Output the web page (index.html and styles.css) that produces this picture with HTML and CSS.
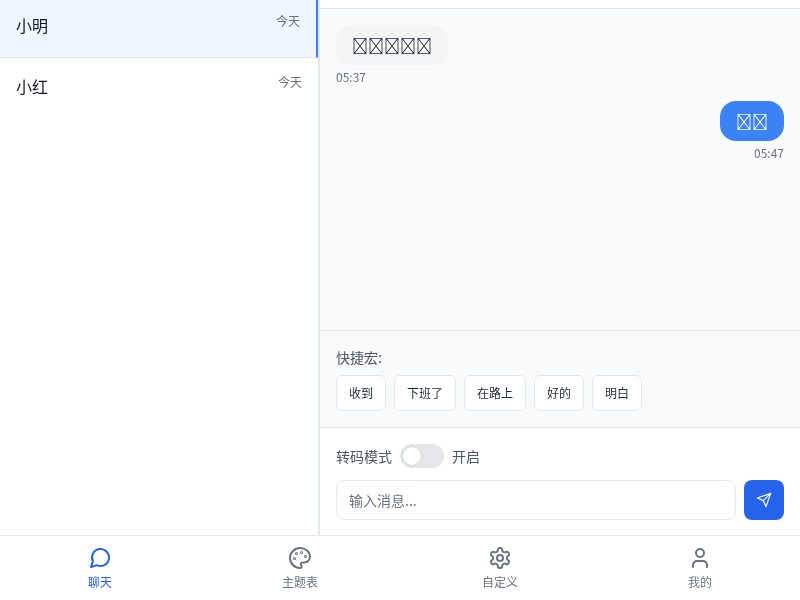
FILE: index.html
```html
<!DOCTYPE html>
<html lang="zh-CN">
<head>
<meta charset="utf-8">
<title>聊天</title>
<link rel="stylesheet" href="styles.css">
</head>
<body>
<div class="app">
  <main class="main">
    <aside class="sidebar">
      <div class="contact active">
        <span class="name">小明</span>
        <span class="date">今天</span>
      </div>
      <div class="contact">
        <span class="name">小红</span>
        <span class="date">今天</span>
      </div>
    </aside>
    <section class="chat">
      <div class="chat-head"></div>
      <div class="messages">
        <div class="msg">
          <div class="bubble">&#xE001;&#xE002;&#xE003;&#xE004;&#xE005;</div>
          <div class="time">05:37</div>
        </div>
        <div class="msg mine">
          <div class="bubble">&#xE006;&#xE007;</div>
          <div class="time">05:47</div>
        </div>
      </div>
      <div class="macros">
        <div class="macro-label">快捷宏:</div>
        <div class="macro-list">
          <button class="macro">收到</button>
          <button class="macro">下班了</button>
          <button class="macro">在路上</button>
          <button class="macro">好的</button>
          <button class="macro">明白</button>
        </div>
      </div>
      <div class="composer">
        <div class="mode">
          <span>转码模式</span>
          <span class="toggle"><span class="knob"></span></span>
          <span>开启</span>
        </div>
        <div class="input-row">
          <input class="input" type="text" placeholder="输入消息...">
          <button class="send" aria-label="发送">
            <svg class="send-icon" viewBox="0 0 24 24"><path d="m22 2-7 20-4-9-9-4Z"/><path d="M22 2 11 13"/></svg>
          </button>
        </div>
      </div>
    </section>
  </main>
  <nav class="nav">
    <div class="tab current">
      <svg class="icon" viewBox="0 0 24 24"><path d="m3 21 1.9-5.7a8.5 8.5 0 1 1 3.8 3.8z"/></svg>
      <span>聊天</span>
    </div>
    <div class="tab">
      <svg class="icon" viewBox="0 0 24 24"><circle cx="13.5" cy="6.5" r=".5"/><circle cx="17.5" cy="10.5" r=".5"/><circle cx="8.5" cy="7.5" r=".5"/><circle cx="6.5" cy="12.5" r=".5"/><path d="M12 2C6.5 2 2 6.5 2 12s4.5 10 10 10c.926 0 1.648-.746 1.648-1.688 0-.437-.18-.835-.437-1.125-.29-.289-.438-.652-.438-1.125a1.64 1.64 0 0 1 1.668-1.668h1.996c3.051 0 5.555-2.503 5.555-5.554C21.965 6.012 17.461 2 12 2z"/></svg>
      <span>主题表</span>
    </div>
    <div class="tab">
      <svg class="icon" viewBox="0 0 24 24"><path d="M12.22 2h-.44a2 2 0 0 0-2 2v.18a2 2 0 0 1-1 1.73l-.43.25a2 2 0 0 1-2 0l-.15-.08a2 2 0 0 0-2.73.73l-.22.38a2 2 0 0 0 .73 2.73l.15.1a2 2 0 0 1 1 1.72v.51a2 2 0 0 1-1 1.74l-.15.09a2 2 0 0 0-.73 2.73l.22.38a2 2 0 0 0 2.73.73l.15-.08a2 2 0 0 1 2 0l.43.25a2 2 0 0 1 1 1.73V20a2 2 0 0 0 2 2h.44a2 2 0 0 0 2-2v-.18a2 2 0 0 1 1-1.73l.43-.25a2 2 0 0 1 2 0l.15.08a2 2 0 0 0 2.73-.73l.22-.39a2 2 0 0 0-.73-2.73l-.15-.08a2 2 0 0 1-1-1.74v-.5a2 2 0 0 1 1-1.74l.15-.09a2 2 0 0 0 .73-2.73l-.22-.38a2 2 0 0 0-2.73-.73l-.15.08a2 2 0 0 1-2 0l-.43-.25a2 2 0 0 1-1-1.73V4a2 2 0 0 0-2-2z"/><circle cx="12" cy="12" r="3"/></svg>
      <span>自定义</span>
    </div>
    <div class="tab">
      <svg class="icon" viewBox="0 0 24 24"><path d="M19 21v-2a4 4 0 0 0-4-4H9a4 4 0 0 0-4 4v2"/><circle cx="12" cy="7" r="4"/></svg>
      <span>我的</span>
    </div>
  </nav>
</div>
</body>
</html>
```
FILE: styles.css
```css
* { box-sizing: border-box; }
html, body { margin: 0; height: 100%; overflow: hidden; }
body {
  font-family: "Noto Sans CJK SC", sans-serif;
  color: #1f2937;
  background: #fff;
}
.app { display: flex; flex-direction: column; height: 600px; will-change: transform; }
.main { display: flex; height: 535px; overflow: hidden; }
.sidebar { width: 320px; flex: none; background: #fff; border-right: 2px solid #e2e8f0; }
.contact {
  display: flex;
  justify-content: space-between;
  padding: 16px 16px 0;
  height: 61px;
}
.contact.active {
  height: 58px;
  padding-top: 13px;
  background: #eff6ff;
  border-right: 2px solid #3b82f6;
  border-bottom: 1px solid #e2e8f0;
}
.name { font-size: 16px; line-height: 24px; color: #111827; }
.date { font-size: 12px; line-height: 16px; color: #6b7280; }
.chat { flex: 1; display: flex; flex-direction: column; min-width: 0; background: #f9fafb; }
.chat-head { height: 9px; flex: none; background: #fff; border-bottom: 1px solid #e2e8f0; }
.messages { flex: 1; display: flex; flex-direction: column; gap: 16px; padding: 16px; min-height: 0; }
.msg { display: flex; flex-direction: column; align-items: flex-start; gap: 4px; }
.msg.mine { align-items: flex-end; }
.bubble {
  height: 40px;
  padding: 8px 16px;
  border-radius: 16px;
  background: #f3f4f6;
  color: #1f2937;
  font-size: 16px;
  line-height: 24px;
}
.mine .bubble { background: #3b82f6; color: #fff; }
.time { font-size: 12px; line-height: 16px; color: #6b7280; }
.macros { flex: none; height: 98px; padding: 16px; border-top: 1px solid #e2e8f0; border-bottom: 1px solid #e2e8f0; }
.macro-label { font-size: 14px; line-height: 20px; color: #4b5563; margin-bottom: 8px; }
.macro-list { display: flex; gap: 8px; }
.macro {
  height: 36px;
  padding: 0 12px;
  border: 1px solid #e2e8f0;
  border-radius: 6px;
  background: #fff;
  color: #1f2937;
  font: 12px/16px "Noto Sans CJK SC", sans-serif;
}
.composer { flex: none; height: 107px; padding: 16px 16px 0; background: #fff; }
.mode { display: flex; align-items: center; gap: 8px; height: 24px; font-size: 14px; color: #4b5563; }
.toggle { width: 44px; height: 24px; border-radius: 12px; background: #e5e7eb; padding: 2px; display: block; }
.knob { display: block; width: 20px; height: 20px; border-radius: 50%; background: #fff; border: 1px solid #d1d5db; }
.input-row { display: flex; gap: 8px; margin-top: 12px; }
.input {
  flex: 1;
  min-width: 0;
  height: 40px;
  padding: 0 12px;
  border: 1px solid #e2e8f0;
  border-radius: 8px;
  background: #fff;
  font: 14px "Noto Sans CJK SC", sans-serif;
  color: #1f2937;
  outline: none;
}
.input::placeholder { color: #6b7280; opacity: 1; }
.send {
  width: 40px;
  height: 40px;
  flex: none;
  border: 0;
  border-radius: 8px;
  background: #2563eb;
  display: flex;
  align-items: center;
  justify-content: center;
  padding: 0;
}
.send-icon { width: 16px; height: 16px; fill: none; stroke: #fff; stroke-width: 1.8; stroke-linecap: round; stroke-linejoin: round; }
.nav { height: 65px; flex: none; display: flex; border-top: 1px solid #e5e7eb; background: #fff; }
.tab {
  flex: 1;
  display: flex;
  flex-direction: column;
  align-items: center;
  padding-top: 10px;
  gap: 4px;
  font-size: 12px;
  line-height: 16px;
  color: #6b7280;
}
.tab.current { color: #2563eb; }
.icon { width: 24px; height: 24px; fill: none; stroke: currentColor; stroke-width: 2; stroke-linecap: round; stroke-linejoin: round; }
```
